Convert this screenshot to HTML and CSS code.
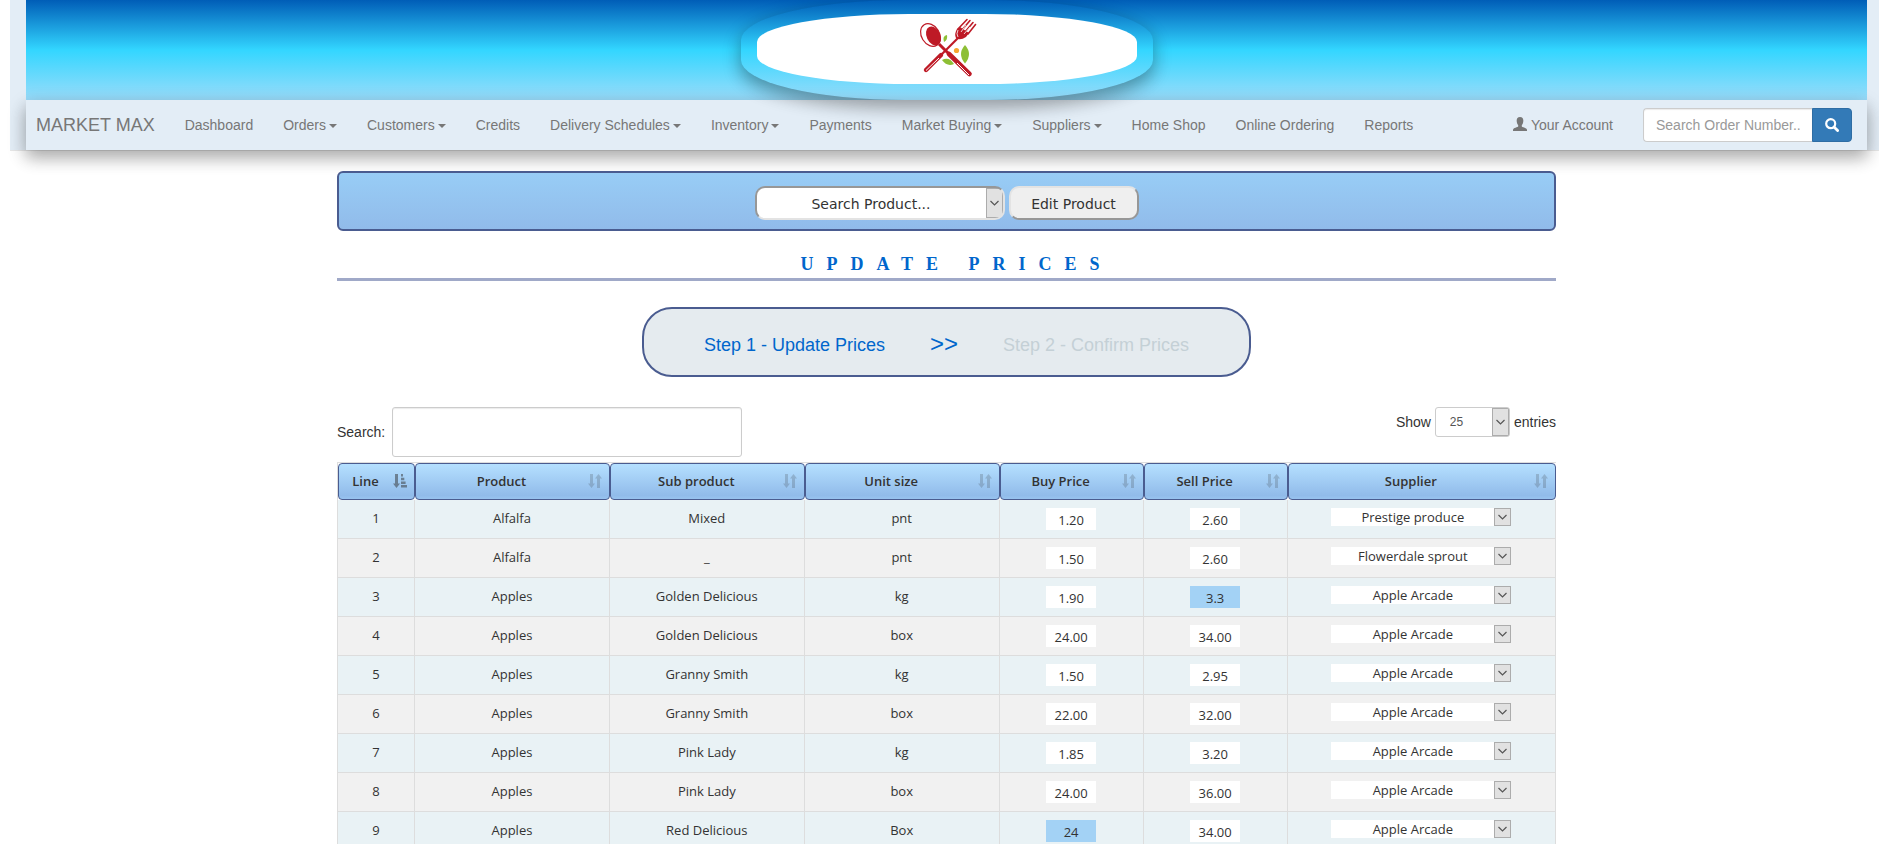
FILE: index.html
```html
<!DOCTYPE html>
<html lang="en">
<head>
  <meta charset="UTF-8" />
  <title>Market Max - Update Prices</title>
  <meta name="viewport" content="width=device-width, initial-scale=1.0"/>
  <link rel="stylesheet" href="styles.css">
</head>
<body>

  <!-- Header and navbar -->
  <div class="topbar">
    <header class="banner">
      <div class="logo-frame">
        <div class="logo">
          <svg width="60" height="60" viewBox="16 9 60 60" aria-label="Logo">
            <!-- fork -->
            <path d="M57 28 L40 45" stroke="#be1a26" stroke-width="2.2"/>
            <path d="M40 45 L25 60" stroke="#be1a26" stroke-width="4.4" stroke-linecap="round"/>
            <path d="M38 48 L25 60.5" stroke="#fff" stroke-width="1"/>
            <path d="M56 19 Q53 24 55 28 Q59 31 65 27 L68 23 L59 17Z" fill="#be1a26"/>
            <path d="M57 19 L66 9.500 M61 20 L69 10.500 M64 22 L72 12.500 M67 24 L74.500 14.500" stroke="#be1a26" stroke-width="1.6" stroke-linecap="round"/>
            <path d="M57 20 Q55 24 57 27 M60 22 L65 15 M63 24 L69 17" stroke="#fff" stroke-width=".8" fill="none"/>
            <!-- spoon -->
            <path d="M38 34 L48 44" stroke="#be1a26" stroke-width="3"/>
            <path d="M48 44 L68.500 64" stroke="#be1a26" stroke-width="4.6" stroke-linecap="round"/>
            <path d="M56 53 L68 65" stroke="#fff" stroke-width="1"/>
            <ellipse cx="29.500" cy="25" rx="9" ry="12" transform="rotate(-32 29.500 25)" fill="#fff" stroke="#be1a26" stroke-width="1.2"/>
            <ellipse cx="32.500" cy="26" rx="6.800" ry="10" transform="rotate(-26 32.500 26)" fill="#be1a26"/>
            <!-- leaves -->
            <path d="M46 25 Q41 26 43 32 Q47 30 46 25Z" fill="#8dbf35"/>
            <path d="M64 35 Q56 44 64 53.500 Q72 44 64 35Z" fill="#8dbf35"/>
            <path d="M41 50 Q48 46 53 54 Q46 57 41 50Z" fill="#8dbf35"/>
            <circle cx="55.500" cy="40.500" r="2.600" fill="#f7a531"/>
          </svg>
        </div>
      </div>
    </header>

    <nav class="navbar">
      <a class="brand" href="#">MARKET MAX</a>
      <a href="#">Dashboard</a>
      <a href="#">Orders<span class="caret"></span></a>
      <a href="#">Customers<span class="caret"></span></a>
      <a href="#">Credits</a>
      <a href="#">Delivery Schedules<span class="caret"></span></a>
      <a href="#">Inventory<span class="caret"></span></a>
      <a href="#">Payments</a>
      <a href="#">Market Buying<span class="caret"></span></a>
      <a href="#">Suppliers<span class="caret"></span></a>
      <a href="#">Home Shop</a>
      <a href="#">Online Ordering</a>
      <a href="#">Reports</a>
      <a class="account" href="#">
        <svg width="14" height="14" viewBox="0 0 14 14"><path d="M7 0 C9.6 0 10.5 1.8 10.3 4.2 C10.2 6 9.4 7.4 8.8 8.2 V9.6 C9 10.4 14 10.8 14 13 V14 H0 V13 C0 10.8 5 10.4 5.2 9.6 V8.2 C4.6 7.4 3.8 6 3.7 4.2 C3.5 1.8 4.4 0 7 0Z" fill="currentColor"/></svg>
        Your Account
      </a>
      <form class="order-search">
        <input type="text" placeholder="Search Order Number.." aria-label="Search Order Number">
        <button type="button" aria-label="Search">
          <svg width="14" height="14" viewBox="0 0 14 14"><circle cx="5.7" cy="5.7" r="4.5" fill="none" stroke="#fff" stroke-width="2.2"/><path d="M9 9 L12.600 12.600" stroke="#fff" stroke-width="2.8" stroke-linecap="round"/></svg>
        </button>
      </form>
    </nav>
  </div>

  <div class="page">
    <main class="container">

      <form class="product-bar">
        <select class="product-select" aria-label="Search Product">
          <option>Search Product...</option>
        </select>
        <button type="button" class="edit-btn">Edit Product</button>
      </form>

      <h1>UPDATE PRICES</h1>

      <div class="steps">
        <span class="step active">Step 1 - Update Prices</span>
        <span class="step-arrow">&gt;&gt;</span>
        <span class="step">Step 2 - Confirm Prices</span>
      </div>

      <div class="table-tools">
        <div class="filter">
          <label for="filter">Search:</label>
          <input type="search" id="filter">
        </div>
        <div class="length">
          <label for="length">Show</label>
          <select id="length"><option>25</option></select>
          <span>entries</span>
        </div>
      </div>

      <!-- Sort icons shared by the header cells -->
      <svg class="symbols" width="0" height="0">
        <symbol id="sort" viewBox="0 0 14 14"><path d="M2 0 H5 V9.5 H7 L3.5 14 L0 9.5 H2Z M9 14 V4.5 H7 L10.5 0 L14 4.5 H12 V14Z"/></symbol>
        <symbol id="sort-asc" viewBox="0 0 14 14"><path d="M2 0 H5 V9.5 H7 L3.5 14 L0 9.5 H2Z M8 0 H10 V2.5 H8Z M8 3.7 H11.3 V6.2 H8Z M8 7.4 H12.6 V9.9 H8Z M8 11 H14 V13.5 H8Z"/></symbol>
      </svg>

      <table class="prices">
        <colgroup>
          <col class="col-line"><col class="col-name"><col class="col-name"><col class="col-name">
          <col class="col-price"><col class="col-price"><col class="col-supplier">
        </colgroup>
        <thead>
          <tr>
            <th>Line<svg class="sorted"><use href="#sort-asc"/></svg></th>
            <th>Product<svg><use href="#sort"/></svg></th>
            <th>Sub product<svg><use href="#sort"/></svg></th>
            <th>Unit size<svg><use href="#sort"/></svg></th>
            <th>Buy Price<svg><use href="#sort"/></svg></th>
            <th>Sell Price<svg><use href="#sort"/></svg></th>
            <th>Supplier<svg><use href="#sort"/></svg></th>
          </tr>
        </thead>
        <tbody>
          <tr>
            <td>1</td><td>Alfalfa</td><td>Mixed</td><td>pnt</td>
            <td><input type="text" aria-label="Buy price 1" value="1.20"></td>
            <td><input type="text" aria-label="Sell price 1" value="2.60"></td>
            <td><select aria-label="Supplier 1"><option>Prestige produce</option></select></td>
          </tr>
          <tr>
            <td>2</td><td>Alfalfa</td><td>_</td><td>pnt</td>
            <td><input type="text" aria-label="Buy price 2" value="1.50"></td>
            <td><input type="text" aria-label="Sell price 2" value="2.60"></td>
            <td><select aria-label="Supplier 2"><option>Flowerdale sprout</option></select></td>
          </tr>
          <tr>
            <td>3</td><td>Apples</td><td>Golden Delicious</td><td>kg</td>
            <td><input type="text" aria-label="Buy price 3" value="1.90"></td>
            <td><input type="text" aria-label="Sell price 3" class="changed" value="3.3"></td>
            <td><select aria-label="Supplier 3"><option>Apple Arcade</option></select></td>
          </tr>
          <tr>
            <td>4</td><td>Apples</td><td>Golden Delicious</td><td>box</td>
            <td><input type="text" aria-label="Buy price 4" value="24.00"></td>
            <td><input type="text" aria-label="Sell price 4" value="34.00"></td>
            <td><select aria-label="Supplier 4"><option>Apple Arcade</option></select></td>
          </tr>
          <tr>
            <td>5</td><td>Apples</td><td>Granny Smith</td><td>kg</td>
            <td><input type="text" aria-label="Buy price 5" value="1.50"></td>
            <td><input type="text" aria-label="Sell price 5" value="2.95"></td>
            <td><select aria-label="Supplier 5"><option>Apple Arcade</option></select></td>
          </tr>
          <tr>
            <td>6</td><td>Apples</td><td>Granny Smith</td><td>box</td>
            <td><input type="text" aria-label="Buy price 6" value="22.00"></td>
            <td><input type="text" aria-label="Sell price 6" value="32.00"></td>
            <td><select aria-label="Supplier 6"><option>Apple Arcade</option></select></td>
          </tr>
          <tr>
            <td>7</td><td>Apples</td><td>Pink Lady</td><td>kg</td>
            <td><input type="text" aria-label="Buy price 7" value="1.85"></td>
            <td><input type="text" aria-label="Sell price 7" value="3.20"></td>
            <td><select aria-label="Supplier 7"><option>Apple Arcade</option></select></td>
          </tr>
          <tr>
            <td>8</td><td>Apples</td><td>Pink Lady</td><td>box</td>
            <td><input type="text" aria-label="Buy price 8" value="24.00"></td>
            <td><input type="text" aria-label="Sell price 8" value="36.00"></td>
            <td><select aria-label="Supplier 8"><option>Apple Arcade</option></select></td>
          </tr>
          <tr>
            <td>9</td><td>Apples</td><td>Red Delicious</td><td>Box</td>
            <td><input type="text" aria-label="Buy price 9" class="changed" value="24"></td>
            <td><input type="text" aria-label="Sell price 9" value="34.00"></td>
            <td><select aria-label="Supplier 9"><option>Apple Arcade</option></select></td>
          </tr>
        </tbody>
      </table>
    </main>
  </div>

</body>
</html>
```
FILE: styles.css
```css
* {
  box-sizing: border-box;
}

body {
  margin: 0;
  font-family: "Liberation Sans", Arial, sans-serif;
  font-size: 14px;
  line-height: 20px;
  color: #333;
  background-color: #fff;
}

input, select, button {
  font-family: inherit;
  font-size: inherit;
  color: inherit;
}

/* Header */
.topbar {
  margin-left: 10px;
  padding: 0 12px 0 16px;
  background-color: #e3edf6;
  border-bottom: 1px solid #e7e7e7;
}

.banner {
  display: flex;
  justify-content: center;
  background: linear-gradient(#005db7, #33d6ff 50%, #9adcfa);
}

.logo-frame {
  position: relative;
  z-index: 1;
  padding: 14px 16px 16px;
  border-radius: 40%;
  box-shadow: 0 8px 16px rgba(0, 0, 0, 0.2), 0 6px 20px rgba(0, 0, 0, 0.19);
}

.logo {
  display: flex;
  align-items: center;
  justify-content: center;
  width: 380px;
  height: 70px;
  border-radius: 40%;
  background-color: #fff;
}

.logo svg {
  overflow: visible;
}

/* Navbar */
.navbar {
  display: flex;
  align-items: center;
  height: 50px;
  background-color: #e3edf6;
  box-shadow: 0 8px 16px rgba(0, 0, 0, 0.2), 0 6px 20px rgba(0, 0, 0, 0.19);
}

.navbar a {
  padding: 15px;
  color: #777;
  text-decoration: none;
  white-space: nowrap;
}

.navbar a:hover {
  color: #333;
}

.navbar .brand {
  padding-left: 10px;
  font-size: 18px;
}

.navbar .account {
  margin-left: auto;
}

.account svg {
  vertical-align: -1px;
}

.caret {
  display: inline-block;
  margin-left: 3px;
  vertical-align: middle;
  border-top: 4px solid;
  border-left: 4px solid transparent;
  border-right: 4px solid transparent;
}

.order-search {
  display: flex;
  padding: 0 15px;
}

.order-search input {
  width: 169px;
  height: 34px;
  padding: 6px 12px;
  border: 1px solid #ccc;
  border-right: 0;
  border-radius: 4px 0 0 4px;
  background-color: #fff;
  box-shadow: inset 0 1px 1px rgba(0, 0, 0, 0.08);
}

.order-search input::placeholder {
  color: #999;
}

.order-search button {
  width: 40px;
  height: 34px;
  padding: 3px 0 0;
  border: 1px solid #2e6da4;
  border-radius: 0 4px 4px 0;
  background-color: #337ab7;
}

/* Page */
.page {
  margin-left: 10px;
  padding: 20px 12px 0 16px;
}

.container {
  max-width: 1219px;
  margin: 0 auto;
}

select {
  appearance: none;
  text-align-last: center;
  background: #fff url("data:image/svg+xml,%3Csvg xmlns='http://www.w3.org/2000/svg'%3E%3Crect width='100%25' height='100%25' fill='%23e1e1e1' stroke='%23acacac' stroke-width='2'/%3E%3Csvg x='50%25' y='50%25' overflow='visible'%3E%3Cpath d='M-4 -2 L0 2 L4 -2' fill='none' stroke='%23555' stroke-width='1.2'/%3E%3C/svg%3E%3C/svg%3E") no-repeat right center / 17px 100%;
}

.product-bar {
  display: flex;
  justify-content: center;
  align-items: center;
  gap: 4px;
  height: 60px;
  padding-top: 4px;
  border: 2px solid #4a5c90;
  border-radius: 6px;
  background: linear-gradient(#98cdf6, #91bbea);
  font-family: "DejaVu Sans", Verdana, sans-serif;
}

.product-select {
  width: 250px;
  height: 34px;
  padding: 1px 17px 0 0;
  border: 2px solid;
  border-color: #979797 #e3e3e3 #e3e3e3 #979797;
  border-radius: 10px;
}

.edit-btn {
  width: 130px;
  height: 34px;
  padding: 1px 0 0;
  border: 2px solid;
  border-color: #e3e3e3 #979797 #979797 #e3e3e3;
  border-radius: 10px;
  background-color: #efefef;
}

h1 {
  margin: 20px 0 26px;
  padding-left: 20px;
  border-bottom: 3px solid #a0a9c8;
  font-family: "Liberation Serif", "Times New Roman", serif;
  font-size: 18px;
  font-weight: bold;
  line-height: 27px;
  letter-spacing: 13px;
  text-align: center;
  color: #06c;
}

.steps {
  display: flex;
  justify-content: center;
  align-items: center;
  gap: 45px;
  width: 50%;
  height: 70px;
  margin: 0 auto 30px;
  border: 2px solid #4a5c90;
  border-radius: 30px;
  background-color: #e5ebef;
  font-size: 18px;
}

.step {
  padding-top: 5px;
  color: #c4d0d6;
}

.step.active, .step-arrow {
  color: #06c;
}

.step-arrow {
  padding-top: 3px;
  font-size: 24px;
}

.table-tools {
  display: flex;
  justify-content: space-between;
  align-items: flex-start;
  margin-bottom: 5px;
}

.filter, .length {
  display: flex;
  align-items: center;
  gap: 4px;
}

.filter {
  gap: 7px;
}

.filter input {
  width: 350px;
  height: 50px;
  padding: 5px 10px;
  border: 1px solid #ccc;
  border-radius: 3px;
  box-shadow: inset 0 1px 1px rgba(0, 0, 0, 0.08);
}

.length select {
  width: 75px;
  height: 30px;
  padding: 0 32px 0 0;
  border: 1px solid #ccc;
  border-radius: 3px;
  font-size: 12px;
  color: #555;
}

.symbols {
  position: absolute;
}

/* Price table */
.prices {
  width: 100%;
  table-layout: fixed;
  border: 1px solid #ddd;
  border-right: 0;
  border-collapse: separate;
  border-spacing: 0;
  font-family: "Trebuchet MS", "Open Sans", sans-serif;
  font-size: 13px;
  text-align: center;
}

.col-line { width: 77px; }
.col-name { width: 16%; }
.col-price { width: 144px; }

.prices th {
  position: relative;
  padding: 7px 30px 8px 8px;
  border: 1px solid #4a5c90;
  border-radius: 4px;
  background: linear-gradient(#b5e0ff, #91bbea 90%, #98c3ef);
  font-weight: 600;
}

.prices th svg {
  position: absolute;
  right: 7px;
  bottom: 11px;
  width: 14px;
  height: 14px;
  fill: #333;
  opacity: 0.2;
}

.prices th .sorted {
  opacity: 0.5;
}

.prices td {
  padding: 8px;
  border-right: 1px solid #ddd;
  border-bottom: 1px solid #ddd;
  vertical-align: top;
}

.prices tbody tr:nth-child(odd) {
  background-color: #e9f2f5;
}

.prices tbody tr:nth-child(even) {
  background-color: #f1f1f1;
}

.prices input, .prices select {
  display: block;
  margin: 0 auto;
  border: 0;
  background-color: #fff;
}

.prices input {
  width: 50px;
  height: 22px;
  padding: 1px 0 0;
  text-align: center;
}

.prices input.changed {
  background-color: #a3d2f5;
}

.prices select {
  width: 180px;
  height: 18px;
  padding: 0 17px 0 0;
}
```
